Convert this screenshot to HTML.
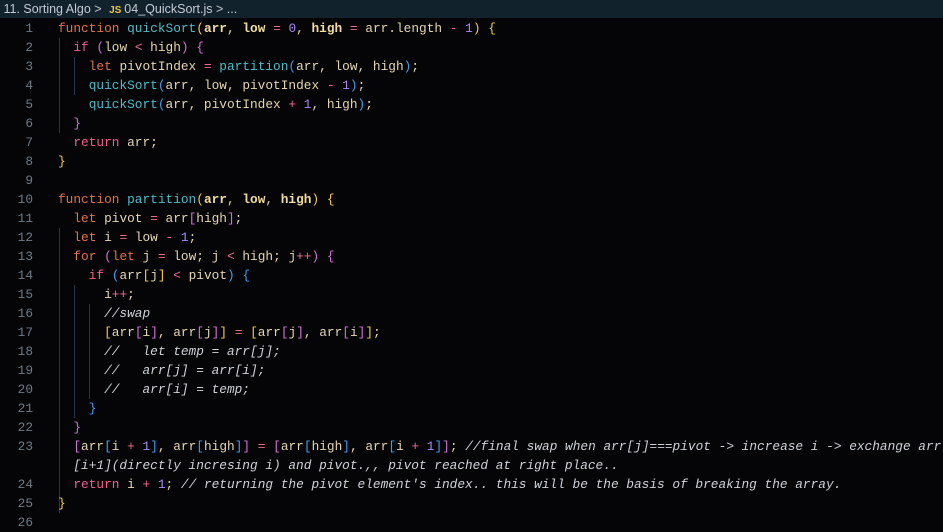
<!DOCTYPE html>
<html><head><meta charset="utf-8"><style>
body{margin:0;width:943px;height:521px;overflow:hidden;background:#050508;font-family:"Liberation Mono",monospace;}
.bc{position:absolute;left:0;top:0;width:943px;height:18px;background:#12222d;color:#c3cbd2;font-family:"Liberation Sans",sans-serif;font-size:12.5px;line-height:18px;white-space:nowrap}
.bc .js{color:#e8c53a;font-weight:bold;font-size:10px;margin:0 3px 0 4px}
.ed{position:absolute;left:0;top:18.5px;width:943px}
.l{position:relative;height:19px;line-height:19px;font-size:12.8px;white-space:pre;color:#e6d6b0}
.n{position:absolute;left:0;width:33px;text-align:right;color:#6e7a86}
.c{position:absolute;left:58px;overflow:hidden;width:885px}
.g{position:absolute;width:1px;background:#2c3440}
.k{color:#e0734f}.p{color:#ee5f8c}.f{color:#4dbcc6}.v{color:#f0dca0;font-weight:bold}.u{color:#a98bf5}.o{color:#ef6a8e}
.b1{color:#f2c94c}.b2{color:#d46fd6}.b3{color:#3d9ef0}
.m{color:#cfd3d8;font-style:italic}
</style></head><body>
<div class="bc">&nbsp;11. Sorting Algo &gt; <span class="js">JS</span>04_QuickSort.js &gt; ...</div>
<div class="ed">
<div class="g" style="left:59px;top:19px;height:95px"></div>
<div class="g" style="left:74px;top:38px;height:38px"></div>
<div class="g" style="left:59px;top:209px;height:285px"></div>
<div class="g" style="left:74px;top:266px;height:133px"></div>
<div class="g" style="left:89px;top:285px;height:95px"></div>
<div class="l"><span class="n">1</span><span class="c"><span class="k">function</span> <span class="f">quickSort</span><span class="b1">(</span><span class="v">arr</span>, <span class="v">low</span> <span class="o">=</span> <span class="u">0</span>, <span class="v">high</span> <span class="o">=</span> arr.length <span class="o">-</span> <span class="u">1</span><span class="b1">)</span> <span class="b1">{</span></span></div>
<div class="l"><span class="n">2</span><span class="c">  <span class="p">if</span> <span class="b2">(</span>low <span class="o">&lt;</span> high<span class="b2">)</span> <span class="b2">{</span></span></div>
<div class="l"><span class="n">3</span><span class="c">    <span class="k">let</span> pivotIndex <span class="o">=</span> <span class="f">partition</span><span class="b3">(</span>arr, low, high<span class="b3">)</span>;</span></div>
<div class="l"><span class="n">4</span><span class="c">    <span class="f">quickSort</span><span class="b3">(</span>arr, low, pivotIndex <span class="o">-</span> <span class="u">1</span><span class="b3">)</span>;</span></div>
<div class="l"><span class="n">5</span><span class="c">    <span class="f">quickSort</span><span class="b3">(</span>arr, pivotIndex <span class="o">+</span> <span class="u">1</span>, high<span class="b3">)</span>;</span></div>
<div class="l"><span class="n">6</span><span class="c">  <span class="b2">}</span></span></div>
<div class="l"><span class="n">7</span><span class="c">  <span class="p">return</span> arr;</span></div>
<div class="l"><span class="n">8</span><span class="c"><span class="b1">}</span></span></div>
<div class="l"><span class="n">9</span><span class="c"></span></div>
<div class="l"><span class="n">10</span><span class="c"><span class="k">function</span> <span class="f">partition</span><span class="b1">(</span><span class="v">arr</span>, <span class="v">low</span>, <span class="v">high</span><span class="b1">)</span> <span class="b1">{</span></span></div>
<div class="l"><span class="n">11</span><span class="c">  <span class="k">let</span> pivot <span class="o">=</span> arr<span class="b2">[</span>high<span class="b2">]</span>;</span></div>
<div class="l"><span class="n">12</span><span class="c">  <span class="k">let</span> i <span class="o">=</span> low <span class="o">-</span> <span class="u">1</span>;</span></div>
<div class="l"><span class="n">13</span><span class="c">  <span class="k">for</span> <span class="b2">(</span><span class="k">let</span> j <span class="o">=</span> low; j <span class="o">&lt;</span> high; j<span class="o">++</span><span class="b2">)</span> <span class="b2">{</span></span></div>
<div class="l"><span class="n">14</span><span class="c">    <span class="p">if</span> <span class="b3">(</span>arr<span class="b1">[</span>j<span class="b1">]</span> <span class="o">&lt;</span> pivot<span class="b3">)</span> <span class="b3">{</span></span></div>
<div class="l"><span class="n">15</span><span class="c">      i<span class="o">++</span>;</span></div>
<div class="l"><span class="n">16</span><span class="c">      <span class="m">//swap</span></span></div>
<div class="l"><span class="n">17</span><span class="c">      <span class="b1">[</span>arr<span class="b2">[</span>i<span class="b2">]</span>, arr<span class="b2">[</span>j<span class="b2">]</span><span class="b1">]</span> <span class="o">=</span> <span class="b1">[</span>arr<span class="b2">[</span>j<span class="b2">]</span>, arr<span class="b2">[</span>i<span class="b2">]</span><span class="b1">]</span>;</span></div>
<div class="l"><span class="n">18</span><span class="c">      <span class="m">//   let temp = arr[j];</span></span></div>
<div class="l"><span class="n">19</span><span class="c">      <span class="m">//   arr[j] = arr[i];</span></span></div>
<div class="l"><span class="n">20</span><span class="c">      <span class="m">//   arr[i] = temp;</span></span></div>
<div class="l"><span class="n">21</span><span class="c">    <span class="b3">}</span></span></div>
<div class="l"><span class="n">22</span><span class="c">  <span class="b2">}</span></span></div>
<div class="l"><span class="n">23</span><span class="c">  <span class="b2">[</span>arr<span class="b3">[</span>i <span class="o">+</span> <span class="u">1</span><span class="b3">]</span>, arr<span class="b3">[</span>high<span class="b3">]</span><span class="b2">]</span> <span class="o">=</span> <span class="b2">[</span>arr<span class="b3">[</span>high<span class="b3">]</span>, arr<span class="b3">[</span>i <span class="o">+</span> <span class="u">1</span><span class="b3">]</span><span class="b2">]</span>; <span class="m">//final swap when arr[j]===pivot -&gt; increase i -&gt; exchange arr</span></span></div>
<div class="l"><span class="n"></span><span class="c">  <span class="m">[i+1](directly incresing i) and pivot.,, pivot reached at right place..</span></span></div>
<div class="l"><span class="n">24</span><span class="c">  <span class="p">return</span> i <span class="o">+</span> <span class="u">1</span>; <span class="m">// returning the pivot element's index.. this will be the basis of breaking the array.</span></span></div>
<div class="l"><span class="n">25</span><span class="c"><span class="b1">}</span></span></div>
<div class="l"><span class="n">26</span><span class="c"></span></div>
</div>
</body></html>
